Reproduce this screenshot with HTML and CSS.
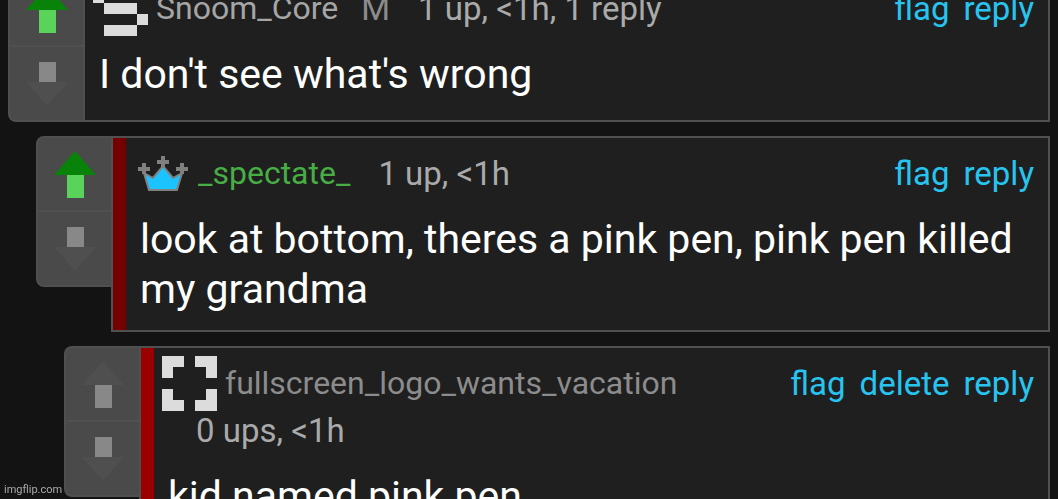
FILE: index.html
```html
<!DOCTYPE html>
<html lang="en">
<head>
  <meta charset="utf-8">
  <meta name="viewport" content="width=device-width, initial-scale=1.0">
  <title>Comments</title>
  <link rel="stylesheet" href="styles.css">
</head>
<body>
  <main class="thread">
    <article class="comment">
      <div class="vote">
        <button class="vote-btn voted" type="button" aria-label="Upvote">
          <svg width="42" height="47" viewBox="0 0 42 47"><path class="head" d="M21 0L42 24H0z"/><path class="stem" d="M13 24h17v23H13z"/></svg>
        </button>
        <button class="vote-btn" type="button" aria-label="Downvote">
          <svg width="42" height="44" viewBox="0 0 42 44"><path class="stem" d="M13 0h17v20H13z"/><path class="head" d="M0 20h42L21 44z"/></svg>
        </button>
      </div>
      <div class="comment-body">
        <header class="comment-header">
          <div class="byline">
            <svg class="avatar" width="55" height="55" viewBox="0 0 5 5" shape-rendering="crispEdges"><path d="M1 0h3v1H1zM0 1h1v1H0zM1 2h3v1H1zM4 3h1v1H4zM1 4h3v1H1z"/></svg>
            <a class="user" href="#">Snoom_Core</a>
            <span class="tag">M</span>
            <span class="meta">1 up, &lt;1h, 1 reply</span>
          </div>
          <nav class="actions">
            <a href="#">flag</a>
            <a href="#">reply</a>
          </nav>
        </header>
        <p class="comment-text">I don't see what's wrong</p>
      </div>
    </article>

    <article class="comment depth-1">
      <div class="vote">
        <button class="vote-btn voted" type="button" aria-label="Upvote">
          <svg width="42" height="47" viewBox="0 0 42 47"><path class="head" d="M21 0L42 24H0z"/><path class="stem" d="M13 24h17v23H13z"/></svg>
        </button>
        <button class="vote-btn" type="button" aria-label="Downvote">
          <svg width="42" height="44" viewBox="0 0 42 44"><path class="stem" d="M13 0h17v20H13z"/><path class="head" d="M0 20h42L21 44z"/></svg>
        </button>
      </div>
      <div class="comment-body">
        <header class="comment-header">
          <div class="byline">
            <svg class="crown" width="50" height="36" viewBox="0 0 50 36">
              <path class="gem" d="M6 17L15 22L25 10L35 22L44 17L39 34H11z"/>
              <path class="cross" d="M0 13H12M6 7V18M19 6H31M25 0V11M38 13H50M44 7V18"/>
            </svg>
            <a class="user green" href="#">_spectate_</a>
            <span class="meta">1 up, &lt;1h</span>
          </div>
          <nav class="actions">
            <a href="#">flag</a>
            <a href="#">reply</a>
          </nav>
        </header>
        <p class="comment-text">look at bottom, theres a pink pen, pink pen killed my grandma</p>
      </div>
    </article>

    <article class="comment depth-2">
      <div class="vote">
        <button class="vote-btn" type="button" aria-label="Upvote">
          <svg width="42" height="47" viewBox="0 0 42 47"><path class="head" d="M21 0L42 24H0z"/><path class="stem" d="M13 24h17v23H13z"/></svg>
        </button>
        <button class="vote-btn" type="button" aria-label="Downvote">
          <svg width="42" height="44" viewBox="0 0 42 44"><path class="stem" d="M13 0h17v20H13z"/><path class="head" d="M0 20h42L21 44z"/></svg>
        </button>
      </div>
      <div class="comment-body">
        <header class="comment-header">
          <div class="byline">
            <svg class="avatar" width="55" height="55" viewBox="0 0 5 5" shape-rendering="crispEdges"><path d="M0 0h2v1H1v1H0zM3 0h2v2H4V1H3zM0 3h1v1h1v1H0zM4 3h1v2H3V4h1z"/></svg>
            <a class="user gray" href="#">fullscreen_logo_wants_vacation</a>
            <span class="meta">0 ups, &lt;1h</span>
          </div>
          <nav class="actions">
            <a href="#">flag</a>
            <a href="#">delete</a>
            <a href="#">reply</a>
          </nav>
        </header>
        <p class="comment-text">kid named pink pen</p>
      </div>
    </article>
  </main>
  <div class="watermark">imgflip.com</div>
</body>
</html>
```

FILE: styles.css
```css
:root {
  --page-bg: #131313;
  --card-bg: #1f1f1f;
  --vote-bg: #4a4a4a;
  --line: #505050;
  --link: #28c4f0;
}

* {
  box-sizing: border-box;
  margin: 0;
  padding: 0;
}

body {
  height: 100vh;
  overflow: hidden;
  background: var(--page-bg);
  color: #fff;
  font-family: Roboto, "Liberation Sans", sans-serif;
  font-size: 33px;
  line-height: 47px;
}

a {
  color: var(--link);
  text-decoration: none;
}

/* the list is scrolled slightly past the first comment */
.thread {
  display: flex;
  flex-direction: column;
  gap: 14px;
  margin-top: -29px;
  padding: 0 8px;
}

.comment {
  display: flex;
  align-items: flex-start;
}

.depth-1 {
  margin-left: 28px;
}

.depth-2 {
  margin-left: 56px;
}

/* voting */
.vote {
  flex: none;
  width: 75px;
  border: 2px solid var(--line);
  border-right: 0;
  border-radius: 8px 0 0 8px;
  background: var(--vote-bg);
  overflow: hidden;
}

.vote-btn {
  display: flex;
  align-items: center;
  justify-content: center;
  width: 100%;
  height: 72px;
  border: 0;
  background: none;
}

.vote-btn + .vote-btn {
  height: 75px;
  border-top: 2px solid var(--line);
}

.head {
  fill: #4f4f4f;
}

.stem {
  fill: #888;
}

.voted .head {
  fill: #088208;
}

.voted .stem {
  fill: #5ad35a;
}

/* comment card */
.comment-body {
  flex: 1;
  min-width: 0;
  min-height: 151px;
  padding: 12px 14px 16px;
  border: 2px solid var(--line);
  background: var(--card-bg);
}

.depth-1 .comment-body,
.depth-2 .comment-body {
  padding-left: 27px;
  background: linear-gradient(to right, #740000 13px, var(--card-bg) 13px);
}

.depth-2 .comment-body {
  background: linear-gradient(to right, #9b0000 13px, var(--card-bg) 13px);
}

.comment-header {
  display: flex;
  align-items: flex-start;
  margin-bottom: 17px;
}

.byline {
  display: flex;
  flex: 1;
  flex-wrap: wrap;
  align-items: center;
}

.avatar {
  margin: -4px 8px -4px -6px;
  fill: #dcdcdc;
}

.crown {
  margin: 0 10px 0 -2px;
}

.gem {
  fill: #1cc4ff;
  stroke: #808080;
  stroke-width: 2;
}

.cross {
  fill: none;
  stroke: #808080;
  stroke-width: 4;
}

.user {
  color: #a6a6a6;
  font-size: 32px;
}

.green {
  color: #48ad44;
}

.gray {
  color: #8c8c8c;
}

.tag {
  margin-left: 23px;
  color: #8c8c8c;
}

.meta {
  margin-left: 28px;
  color: #aaa;
}

.actions {
  display: flex;
  gap: 14px;
}

.comment-text {
  font-size: 41px;
  line-height: 50px;
}

.watermark {
  position: fixed;
  left: 4px;
  bottom: 2px;
  color: #aaa;
  font-size: 11px;
  line-height: 14px;
}
```
